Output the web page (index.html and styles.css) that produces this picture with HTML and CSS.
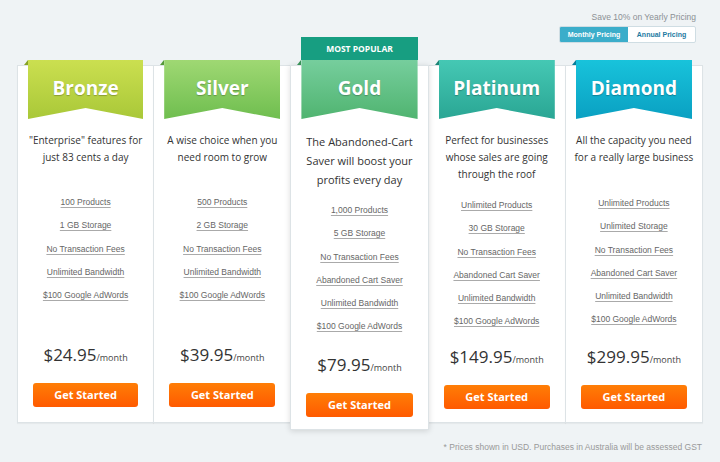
FILE: index.html
```html
<!DOCTYPE html>
<html>
<head>
<meta charset="utf-8">
<link rel="stylesheet" href="styles.css">
</head>
<body>
<div class="page">
  <div class="top">
    <div class="save">Save 10% on Yearly Pricing</div>
    <div class="toggle"><span class="on">Monthly Pricing</span><span class="off">Annual Pricing</span></div>
  </div>
  <div class="plans">
    <div class="card bronze">
      <div class="ribbon"><div class="face">Bronze</div></div>
      <p class="desc">"Enterprise" features for<br>just 83 cents a day</p>
      <ul class="features">
        <li><span>100 Products</span></li>
        <li><span>1 GB Storage</span></li>
        <li><span>No Transaction Fees</span></li>
        <li><span>Unlimited Bandwidth</span></li>
        <li><span>$100 Google AdWords</span></li>
      </ul>
      <div class="buy">
        <div class="price">$24.95<small>/month</small></div>
        <a class="btn" href="#">Get Started</a>
      </div>
    </div>
    <div class="card silver">
      <div class="ribbon"><div class="face">Silver</div></div>
      <p class="desc">A wise choice when you<br>need room to grow</p>
      <ul class="features">
        <li><span>500 Products</span></li>
        <li><span>2 GB Storage</span></li>
        <li><span>No Transaction Fees</span></li>
        <li><span>Unlimited Bandwidth</span></li>
        <li><span>$100 Google AdWords</span></li>
      </ul>
      <div class="buy">
        <div class="price">$39.95<small>/month</small></div>
        <a class="btn" href="#">Get Started</a>
      </div>
    </div>
    <div class="card gold popular">
      <div class="tab">MOST POPULAR</div>
      <div class="ribbon"><div class="face">Gold</div></div>
      <p class="desc">The Abandoned-Cart<br>Saver will boost your<br>profits every day</p>
      <ul class="features">
        <li><span>1,000 Products</span></li>
        <li><span>5 GB Storage</span></li>
        <li><span>No Transaction Fees</span></li>
        <li><span>Abandoned Cart Saver</span></li>
        <li><span>Unlimited Bandwidth</span></li>
        <li><span>$100 Google AdWords</span></li>
      </ul>
      <div class="buy">
        <div class="price">$79.95<small>/month</small></div>
        <a class="btn" href="#">Get Started</a>
      </div>
    </div>
    <div class="card platinum">
      <div class="ribbon"><div class="face">Platinum</div></div>
      <p class="desc">Perfect for businesses<br>whose sales are going<br>through the roof</p>
      <ul class="features">
        <li><span>Unlimited Products</span></li>
        <li><span>30 GB Storage</span></li>
        <li><span>No Transaction Fees</span></li>
        <li><span>Abandoned Cart Saver</span></li>
        <li><span>Unlimited Bandwidth</span></li>
        <li><span>$100 Google AdWords</span></li>
      </ul>
      <div class="buy">
        <div class="price">$149.95<small>/month</small></div>
        <a class="btn" href="#">Get Started</a>
      </div>
    </div>
    <div class="card diamond">
      <div class="ribbon"><div class="face">Diamond</div></div>
      <p class="desc">All the capacity you need<br>for a really large business</p>
      <ul class="features">
        <li><span>Unlimited Products</span></li>
        <li><span>Unlimited Storage</span></li>
        <li><span>No Transaction Fees</span></li>
        <li><span>Abandoned Cart Saver</span></li>
        <li><span>Unlimited Bandwidth</span></li>
        <li><span>$100 Google AdWords</span></li>
      </ul>
      <div class="buy">
        <div class="price">$299.95<small>/month</small></div>
        <a class="btn" href="#">Get Started</a>
      </div>
    </div>
  </div>
  <p class="note">* Prices shown in USD. Purchases in Australia will be assessed GST</p>
</div>
</body>
</html>
```
FILE: styles.css
```css
* { box-sizing: border-box; margin: 0; padding: 0; }
html, body { width: 720px; height: 462px; overflow: hidden; }
body { background: #eff3f5; font-family: "Open Sans", sans-serif; }
.page { padding: 0 17px; }

.top { display: flex; flex-direction: column; align-items: flex-end; padding-top: 11px; padding-right: 7px; }
.save { font: 8.5px/12px "Liberation Sans", Arial, sans-serif; color: #8b9094; }
.toggle { margin-top: 3px; display: flex; height: 17px; border: 1px solid #cfdde3; border-radius: 2px; background: #fff; overflow: hidden; }
.toggle span { font: bold 7px/15px "Liberation Sans", Arial, sans-serif; text-align: center; }
.toggle .on { width: 68px; background: #3badca; color: #fff; }
.toggle .off { width: 67px; color: #1e7aa2; }

.plans { display: grid; grid-template-columns: repeat(5, 1fr); margin-top: 22px; }
.card { position: relative; display: flex; flex-direction: column; min-height: 358px; background: #fff; border: 1px solid #dde3e6; margin-left: -1px; box-shadow: 0 1px 1px rgba(0,0,0,.04); }
.card:first-child { margin-left: 0; }
.card.popular { z-index: 2; margin-bottom: -7px; box-shadow: 0 1px 6px rgba(0,0,0,.14); }

.bronze { --c1: #cbdf50; --c2: #a9c838; --fold: #87a226; }
.silver { --c1: #9fd873; --c2: #6fbe4f; --fold: #55993a; }
.gold { --c1: #76ce9d; --c2: #50b470; --fold: #389157; }
.platinum { --c1: #45c8b4; --c2: #2aa694; --fold: #1d8375; }
.diamond { --c1: #18c3db; --c2: #0aa0c2; --fold: #077d99; }

.tab { margin: -29px 10px 0; height: 23px; background: #179e81; color: #fff; font-weight: 700; font-size: 8.5px; line-height: 23px; text-align: center; }

.ribbon { position: relative; margin: -6px 10px 0; height: 59px; }
.popular .ribbon { margin-top: 0; }
.ribbon::before { content: ""; position: absolute; left: -4px; top: 0; border-left: 4px solid transparent; border-bottom: 5px solid var(--fold); }
.face { height: 59px; padding-top: 15px; clip-path: polygon(0 0, 100% 0, 100% 100%, 50% 48px, 0 100%); background: linear-gradient(var(--c1), var(--c2)); color: #fff; font-weight: 700; font-size: 19px; line-height: 26px; text-align: center; text-shadow: 0 1px 1px rgba(0,0,0,.25); }

.desc { margin: 13px 3px 10px; min-height: 49px; font-size: 10px; line-height: 17px; color: #333; text-align: center; }
.platinum .desc { margin-bottom: 11px; }
.diamond .desc { margin-bottom: 11px; }
.popular .desc { font-size: 11px; line-height: 19px; }

.features { list-style: none; text-align: center; font: 8.5px/23.3px "Liberation Sans", Arial, sans-serif; color: #666; }
.features span { text-decoration: underline; text-decoration-color: #aaa; text-underline-offset: 2px; }

.buy { margin-top: auto; padding: 0 15px 15px; text-align: center; }
.platinum .buy, .diamond .buy { padding-bottom: 13px; }
.popular .buy { padding-bottom: 12px; }
.price { font-size: 17px; line-height: 20px; color: #333; }
.price small { font-size: 9px; color: #444; }
.btn { display: block; margin-top: 15.5px; height: 24px; border-radius: 3px; background: linear-gradient(#ff7e06, #ff5a00); color: #fff; font-weight: 700; font-size: 11px; line-height: 24px; text-decoration: none; }

.note { margin-top: 18px; padding-right: 1px; text-align: right; font: 8.5px/12px "Liberation Sans", Arial, sans-serif; color: #999; }
```
